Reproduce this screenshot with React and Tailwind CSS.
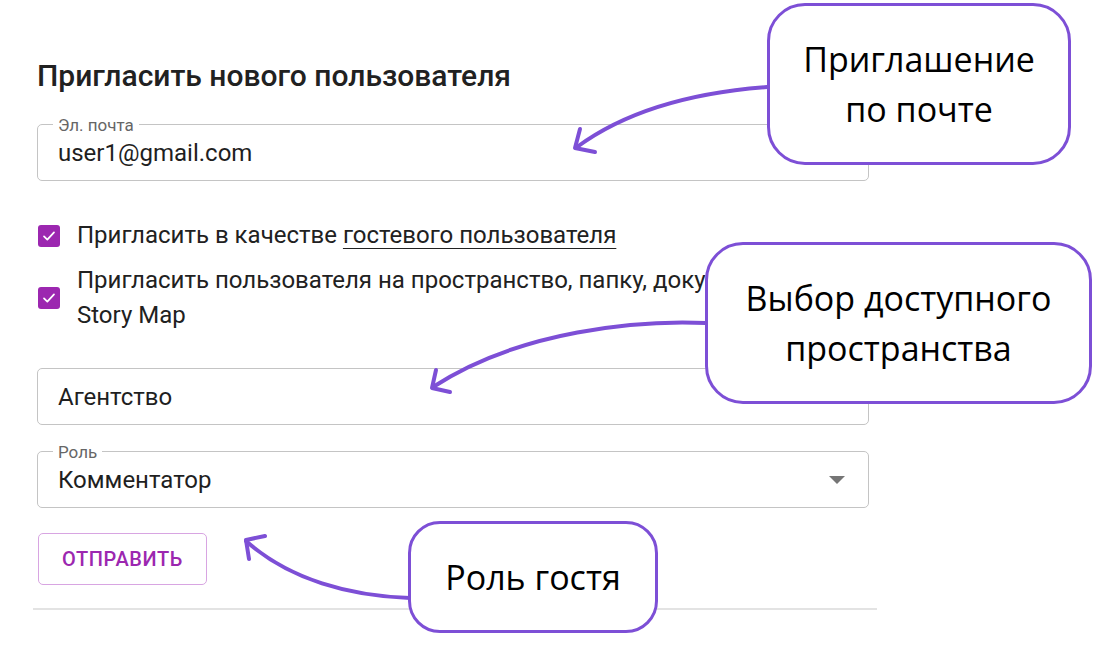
function Field({ label, value, select }) {
  return (
    <div className="relative h-[57px] rounded-[5px] border border-[#c4c4c4] flex items-center pl-[20px] pr-[22px]">
      {label && (
        <span className="absolute left-[15px] top-0 -translate-y-1/2 bg-white px-[5px] text-[17px] leading-[18px] text-[#666]">
          {label}
        </span>
      )}
      <span className="flex-1 text-[24px] text-[#1f1f1f]">{value}</span>
      {select && (
        <svg width="16" height="8" viewBox="0 0 16 8" className="mr-[1px]">
          <path d="M0 0 L16 0 L8 8 Z" fill="#757575" />
        </svg>
      )}
    </div>
  );
}

function Check() {
  return (
    <span className="w-[22px] h-[22px] shrink-0 rounded-[3px] bg-[#9c27b0] flex items-center justify-center">
      <svg width="16" height="16" viewBox="0 0 24 24">
        <path d="M4.5 12.5 L9.5 17.5 L19.5 6.5" fill="none" stroke="white" strokeWidth="2.6" strokeLinecap="round" strokeLinejoin="round" />
      </svg>
    </span>
  );
}

function Callout({ className, children }) {
  return (
    <div
      className={`absolute bg-white border-[3px] border-[#7d4fd6] flex items-center justify-center text-center text-black font-['Open_Sans',sans-serif] text-[34px] leading-[50px] ${className}`}
    >
      {children}
    </div>
  );
}

export default function App() {
  return (
    <div className="relative w-[1094px] h-[659px] bg-white overflow-hidden font-['Roboto',sans-serif]">
      {/* FORM */}
      <div className="pt-[60px] pl-[37px] w-[869px]">
        <h2 className="text-[30px] leading-[32px] font-medium text-[#212121]">Пригласить нового пользователя</h2>

        <div className="mt-[32px]">
          <Field label="Эл. почта" value="user1@gmail.com" />
        </div>

        <div className="mt-[37px] flex items-center gap-[17px] pl-[1px] text-[24px] leading-[35px] text-[#212121]">
          <Check />
          <span>
            Пригласить в качестве <span className="underline underline-offset-[5px] decoration-1">гостевого пользователя</span>
          </span>
        </div>

        <div className="mt-[10px] flex items-center gap-[17px] pl-[1px] text-[24px] leading-[35px] text-[#212121]">
          <Check />
          <span>
            Пригласить пользователя на пространство, папку, документ или
            <br />
            Story Map
          </span>
        </div>

        <div className="mt-[35px]">
          <Field value="Агентство" />
        </div>

        <div className="mt-[26px]">
          <Field label="Роль" value="Комментатор" select />
        </div>

        <button className="mt-[25px] ml-[1px] h-[52px] w-[169px] rounded-[5px] border border-[#d8a5e2] text-[#9c27b0] text-[20px] font-medium tracking-[0.6px]">
          ОТПРАВИТЬ
        </button>
      </div>

      <div className="mt-[23px] ml-[33px] w-[844px] h-[2px] bg-[#e3e3e3]" />

      {/* ANNOTATIONS */}
      <svg className="absolute inset-0 pointer-events-none" width="1094" height="659" viewBox="0 0 1094 659" fill="none">
        <g stroke="#7d4fd6" strokeWidth="4" strokeLinecap="round" strokeLinejoin="round">
          <path d="M767 87 C700 92 630 108 577 147" />
          <path d="M580 129 L575 148 L595 152" />
          <path d="M706 323 C640 320 520 330 433 387" />
          <path d="M436 370 L432 388 L450 392" />
          <path d="M410 598 C350 596 290 580 246 541" />
          <path d="M265 536 L246 540 L249 559" />
        </g>
      </svg>

      <Callout className="left-[767px] top-[3px] w-[304px] h-[162px] rounded-[38px]">
        <span>
          Приглашение
          <br />
          по почте
        </span>
      </Callout>
      <Callout className="left-[705px] top-[242px] w-[387px] h-[162px] rounded-[38px]">
        <span>
          Выбор доступного
          <br />
          пространства
        </span>
      </Callout>
      <Callout className="left-[408px] top-[521px] w-[250px] h-[112px] rounded-[32px]">
        <span>Роль гостя</span>
      </Callout>
    </div>
  );
}
